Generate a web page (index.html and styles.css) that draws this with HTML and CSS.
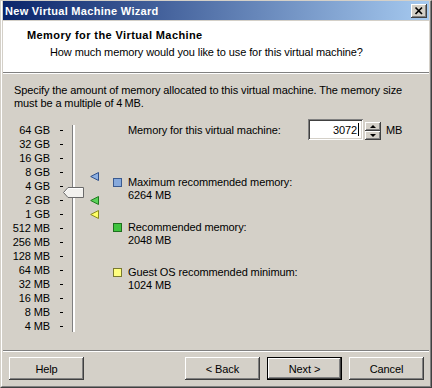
FILE: index.html
```html
<!DOCTYPE html>
<html>
<head>
<meta charset="utf-8">
<link rel="stylesheet" href="styles.css">
</head>
<body>
<div class="window">
  <div class="frame">
    <div class="titlebar">
      <span class="title">New Virtual Machine Wizard</span>
      <div class="close">
        <svg width="16" height="14" viewBox="0 0 16 14"><path d="M4.5 3.5 L11 10 M11 3.5 L4.5 10" stroke="#000" stroke-width="1.7" fill="none"/></svg>
      </div>
    </div>
    <div class="header">
      <div class="h-title">Memory for the Virtual Machine</div>
      <div class="h-sub">How much memory would you like to use for this virtual machine?</div>
    </div>
    <div class="sep"></div>
    <div class="body">
      <p class="intro">Specify the amount of memory allocated to this virtual machine. The memory size<br>must be a multiple of 4&#8239;MB.</p>
      <div class="main">
        <div class="slider">
          <div class="scale">
            <div class="tick"><span class="lbl">64 GB</span><span class="dash"></span></div>
            <div class="tick"><span class="lbl">32 GB</span><span class="dash"></span></div>
            <div class="tick"><span class="lbl">16 GB</span><span class="dash"></span></div>
            <div class="tick"><span class="lbl">8 GB</span><span class="dash"></span></div>
            <div class="tick"><span class="lbl">4 GB</span><span class="dash"></span></div>
            <div class="tick"><span class="lbl">2 GB</span><span class="dash"></span></div>
            <div class="tick"><span class="lbl">1 GB</span><span class="dash"></span></div>
            <div class="tick"><span class="lbl">512 MB</span><span class="dash"></span></div>
            <div class="tick"><span class="lbl">256 MB</span><span class="dash"></span></div>
            <div class="tick"><span class="lbl">128 MB</span><span class="dash"></span></div>
            <div class="tick"><span class="lbl">64 MB</span><span class="dash"></span></div>
            <div class="tick"><span class="lbl">32 MB</span><span class="dash"></span></div>
            <div class="tick"><span class="lbl">16 MB</span><span class="dash"></span></div>
            <div class="tick"><span class="lbl">8 MB</span><span class="dash"></span></div>
            <div class="tick"><span class="lbl">4 MB</span><span class="dash"></span></div>
          </div>
          <div class="track"></div>
          <svg class="thumb" width="21" height="11" viewBox="0 0 21 11">
            <polygon points="0.5,5.5 5,0.5 20.5,0.5 20.5,10.5 5,10.5" fill="#f2f1ee" stroke="#6a6a6a"/>
            <polyline points="1.8,5.5 5.4,1.5 19.5,1.5" fill="none" stroke="#fff"/>
          </svg>
          <svg class="marker m-max" width="9" height="9" viewBox="0 0 9 9"><polygon points="0.7,4.5 8.5,0.5 8.5,8.5" fill="#8db0e2" stroke="#2f4f8a"/></svg>
          <svg class="marker m-rec" width="9" height="9" viewBox="0 0 9 9"><polygon points="0.7,4.5 8.5,0.5 8.5,8.5" fill="#5ad25a" stroke="#1f7a1f"/></svg>
          <svg class="marker m-min" width="9" height="9" viewBox="0 0 9 9"><polygon points="0.7,4.5 8.5,0.5 8.5,8.5" fill="#ffff66" stroke="#8a8a1f"/></svg>
        </div>
        <div class="panel">
          <div class="mem-row">
            <span class="mem-label">Memory for this virtual machine:</span>
            <div class="input"><span class="val">3072</span><span class="caret"></span></div>
            <div class="spin">
              <div class="spin-btn"><span class="arr-up"></span></div>
              <div class="spin-btn"><span class="arr-down"></span></div>
            </div>
            <span class="unit">MB</span>
          </div>
          <div class="legend">
            <div class="item">
              <span class="sq sq-max"></span>
              <div class="txt"><div>Maximum recommended memory:</div><div>6264 MB</div></div>
            </div>
            <div class="item">
              <span class="sq sq-rec"></span>
              <div class="txt"><div>Recommended memory:</div><div>2048 MB</div></div>
            </div>
            <div class="item">
              <span class="sq sq-min"></span>
              <div class="txt"><div>Guest OS recommended minimum:</div><div>1024 MB</div></div>
            </div>
          </div>
        </div>
      </div>
    </div>
    <div class="sep"></div>
    <div class="footer">
      <button class="btn">Help</button>
      <button class="btn btn-back">&lt; Back</button>
      <button class="btn btn-default">Next &gt;</button>
      <button class="btn">Cancel</button>
    </div>
  </div>
</div>
</body>
</html>
```
FILE: styles.css
```css
* { box-sizing: border-box; }
html, body { margin: 0; padding: 0; }
body {
  width: 432px;
  height: 388px;
  overflow: hidden;
  background: #d4d0c8;
  font-family: "Liberation Sans", Arial, sans-serif;
  font-size: 11px;
  letter-spacing: -0.1px;
  color: #000;
}
.window {
  width: 432px;
  height: 388px;
  border-top: 1px solid #d4d0c8;
  border-left: 1px solid #d4d0c8;
  border-right: 1px solid #404040;
  border-bottom: 1px solid #404040;
}
.frame {
  height: 100%;
  display: flex;
  flex-direction: column;
  border-left: 1px solid #fff;
  border-right: 1px solid #808080;
  border-bottom: 1px solid #808080;
  padding: 0 1px 1px 1px;
  background: #d4d0c8;
}
.titlebar {
  flex: none;
  height: 19px;
  display: flex;
  align-items: center;
  justify-content: space-between;
  padding: 1px 2px 0 2px;
  background: linear-gradient(to right, #0a246a, #a6caf0);
  color: #fff;
  font-weight: bold;
  letter-spacing: 0.3px;
}
.close {
  width: 16px;
  height: 14px;
  background: #d4d0c8;
  box-shadow: inset -1px -1px #404040, inset 1px 1px #fff, inset -2px -2px #808080;
}
.close svg { display: block; }
.header {
  flex: none;
  margin-top: 1px;
  height: 51px;
  background: #fff;
  padding: 7px 0 0 24px;
}
.h-title {
  font-weight: bold;
  line-height: 14px;
  letter-spacing: 0.4px;
}
.h-sub {
  line-height: 14px;
  margin-top: 3px;
  padding-left: 23px;
}
.sep {
  flex: none;
  height: 2px;
  border-top: 1px solid #808080;
  border-bottom: 1px solid #fff;
}
.body {
  flex: 1;
  padding-top: 10px;
}
.intro {
  margin: 0 0 0 11px;
  line-height: 13px;
}
.main {
  display: flex;
  margin-top: 9px;
}
.slider {
  position: relative;
  width: 110px;
  margin-top: 4px;
  display: flex;
  align-items: flex-start;
}
.scale { width: 63px; }
.tick {
  display: flex;
  align-items: center;
  height: 14px;
}
.lbl {
  width: 47px;
  text-align: right;
  white-space: nowrap;
}
.dash {
  width: 3px;
  height: 1px;
  margin-left: 10px;
  margin-top: 1px;
  background: #000;
}
.track {
  width: 3px;
  height: 207px;
  margin: 2px 0 0 6px;
  border-left: 1px solid #808080;
  background: #fff;
}
.thumb {
  position: absolute;
  left: 60px;
  top: 64px;
}
.marker {
  position: absolute;
  left: 87px;
}
.m-max { top: 49px; }
.m-rec { top: 73px; }
.m-min { top: 87px; }
.panel {
  display: flex;
  flex-direction: column;
}
.mem-row {
  display: flex;
  align-items: center;
  height: 21px;
  padding-left: 15px;
}
.mem-label { width: 180px; white-space: nowrap; }
.input {
  width: 55px;
  height: 21px;
  background: #fff;
  box-shadow: inset 1px 1px #808080, inset -1px -1px #fff, inset 2px 2px #404040, inset -2px -2px #d4d0c8;
  display: flex;
  align-items: center;
  justify-content: flex-end;
  padding-right: 4px;
}
.caret {
  width: 1px;
  height: 13px;
  background: #000;
  margin-left: 1px;
}
.spin {
  align-self: flex-end;
  margin-left: 2px;
  width: 16px;
  height: 18px;
  display: flex;
  flex-direction: column;
}
.spin-btn {
  height: 9px;
  display: flex;
  align-items: center;
  justify-content: center;
  background: #d4d0c8;
  box-shadow: inset -1px -1px #404040, inset 1px 1px #fff, inset -2px -2px #808080;
}
.arr-up {
  width: 0;
  height: 0;
  border-left: 3px solid transparent;
  border-right: 3px solid transparent;
  border-bottom: 3px solid #000;
  margin-top: -1px;
}
.arr-down {
  width: 0;
  height: 0;
  border-left: 3px solid transparent;
  border-right: 3px solid transparent;
  border-top: 3px solid #000;
  margin-top: -1px;
}
.unit { margin-left: 5px; }
.legend {
  display: flex;
  flex-direction: column;
  gap: 19px;
  margin-top: 36px;
}
.item {
  display: flex;
  align-items: flex-start;
}
.sq {
  width: 9px;
  height: 9px;
  margin-top: 2px;
  border: 1px solid #333;
}
.sq-max { background: #86a9dc; border-color: #3a5a90; }
.sq-rec { background: #3fc43f; border-color: #1f6f1f; }
.sq-min { background: #ffff80; border-color: #7a7a30; }
.txt {
  margin-left: 6px;
  line-height: 13px;
}
.footer {
  flex: none;
  height: 33px;
  display: flex;
  align-items: flex-start;
  padding: 5px 5px 5px 6px;
}
.btn {
  width: 75px;
  height: 23px;
  margin: 0;
  padding: 0;
  border: 0;
  background: #d4d0c8;
  font-family: "Liberation Sans", Arial, sans-serif;
  font-size: 11px;
  letter-spacing: -0.1px;
  color: #000;
  box-shadow: inset -1px -1px #404040, inset 1px 1px #fff, inset -2px -2px #808080;
}
.btn-back { margin-left: auto; }
.btn-default {
  margin-left: 7px;
  margin-right: 7px;
  box-shadow: inset 0 0 0 1px #000, inset -2px -2px #404040, inset 2px 2px #fff, inset -3px -3px #808080;
}
```
